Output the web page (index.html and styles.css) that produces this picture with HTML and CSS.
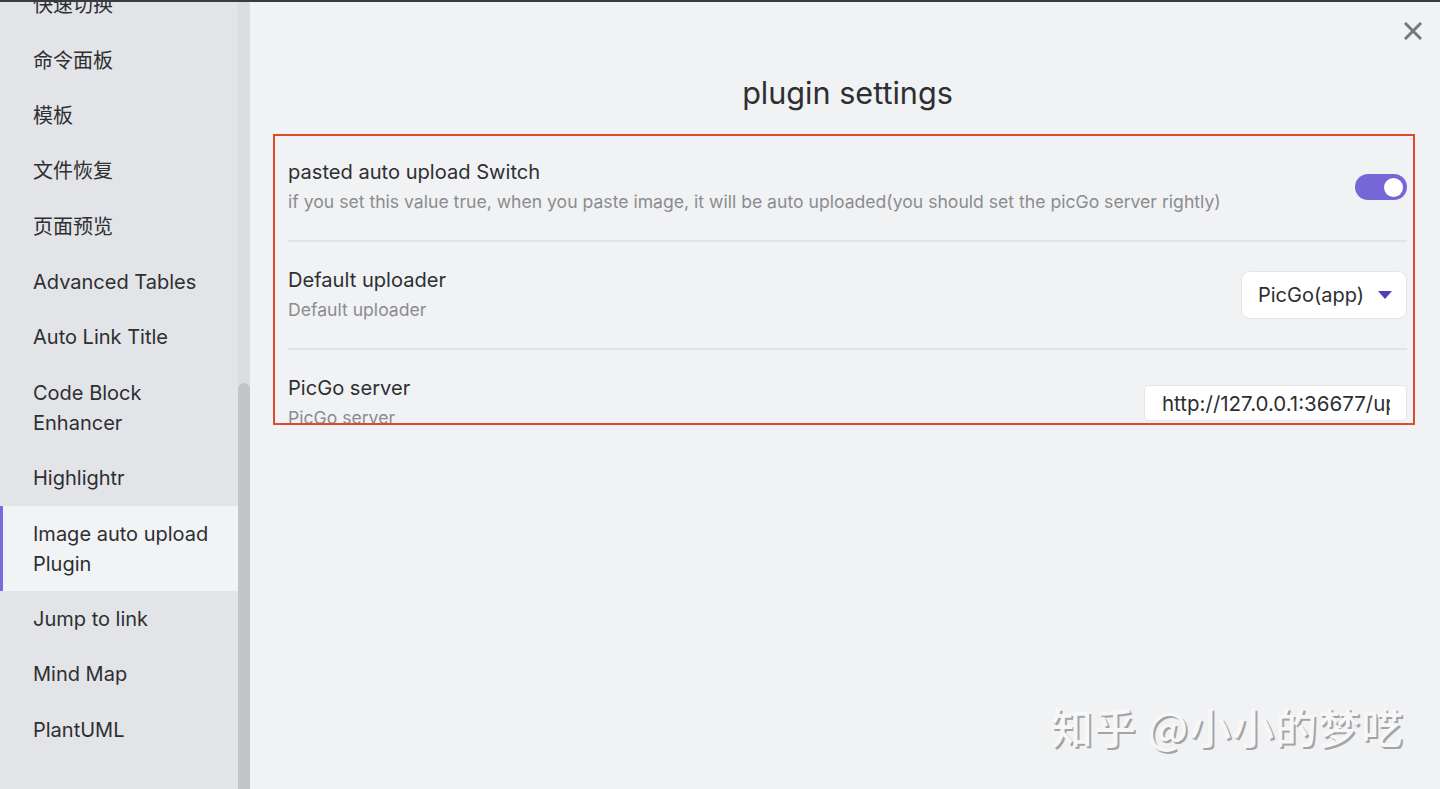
FILE: index.html
```html
<!DOCTYPE html>
<html lang="zh">
<head>
<meta charset="utf-8">
<title>plugin settings</title>
<link rel="stylesheet" href="styles.css">
</head>
<body>
<div class="app">
  <aside class="sidebar">
    <nav class="nav">
      <div class="nav-item">快速切换</div>
      <div class="nav-item">命令面板</div>
      <div class="nav-item">模板</div>
      <div class="nav-item">文件恢复</div>
      <div class="nav-item">页面预览</div>
      <div class="nav-item">Advanced Tables</div>
      <div class="nav-item">Auto Link Title</div>
      <div class="nav-item">Code Block<br>Enhancer</div>
      <div class="nav-item">Highlightr</div>
      <div class="nav-item active">Image auto upload<br>Plugin</div>
      <div class="nav-item">Jump to link</div>
      <div class="nav-item">Mind Map</div>
      <div class="nav-item">PlantUML</div>
    </nav>
    <div class="scroll-track"><div class="scroll-thumb"></div></div>
  </aside>
  <main class="main">
    <button class="close" aria-label="close">
      <svg width="18" height="18" viewBox="0 0 18 18"><path d="M2 2 L16 16 M16 2 L2 16" stroke="#777879" stroke-width="3" stroke-linecap="square" fill="none"/></svg>
    </button>
    <h1 class="title">plugin settings</h1>
    <section class="settings">
      <div class="setting">
        <div class="info">
          <div class="name">pasted auto upload Switch</div>
          <div class="desc">if you set this value true, when you paste image, it will be auto uploaded(you should set the picGo server rightly)</div>
        </div>
        <div class="toggle"><span class="knob"></span></div>
      </div>
      <div class="setting">
        <div class="info">
          <div class="name">Default uploader</div>
          <div class="desc">Default uploader</div>
        </div>
        <div class="select">
          <span>PicGo(app)</span>
          <svg width="14" height="9" viewBox="0 0 14 9"><path d="M0 0 H14 L7 8 Z" fill="#4f3fb8"/></svg>
        </div>
      </div>
      <div class="setting setting-last">
        <div class="info">
          <div class="name">PicGo server</div>
          <div class="desc">PicGo server</div>
        </div>
        <div class="input"><span class="input-text">http://127.0.0.1:36677/upload</span></div>
      </div>
      <div class="highlight-box"></div>
    </section>
    <div class="watermark">知乎 @小小的梦呓</div>
  </main>
</div>
</body>
</html>
```
FILE: styles.css
```css
* { box-sizing: border-box; }
html, body {
  margin: 0;
  padding: 0;
  height: 100%;
  overflow: hidden;
}
body {
  font-family: Inter, "Noto Sans CJK SC", sans-serif;
  color: #2d2f32;
  background: #f1f2f4;
  border-top: 2px solid #3a3b3d;
}
.app {
  display: flex;
  height: 787px;
}
.sidebar {
  width: 250px;
  flex: none;
  display: flex;
  background: #e3e4e7;
  overflow: hidden;
}
.nav {
  width: 238px;
  flex: none;
  margin-top: -24.5px;
}
.nav-item {
  padding: 12.7px 0 12.7px 33px;
  font-size: 20px;
  line-height: 30px;
  color: #2d2f32;
  white-space: nowrap;
}
.nav-item.active {
  background: #f2f3f5;
  border-left: 3px solid #7a6ae0;
  padding-left: 30px;
}
.scroll-track {
  width: 12px;
  flex: none;
  background: #dcdde0;
  display: flex;
  flex-direction: column;
}
.scroll-thumb {
  margin-top: 381px;
  flex: 1;
  background: #c3c4c6;
  border-radius: 6px 6px 0 0;
}
.main {
  flex: 1;
  position: relative;
  padding: 0 33px 0 38px;
}
.close {
  position: absolute;
  top: 18px;
  right: 16px;
  width: 22px;
  height: 22px;
  padding: 2px;
  border: 0;
  background: transparent;
}
.title {
  margin: 0;
  padding-top: 71px;
  height: 132px;
  text-align: center;
  font-size: 30.6px;
  line-height: 40px;
  font-weight: 400;
  color: #2d2f32;
}
.settings {
  position: relative;
}
.setting {
  display: flex;
  align-items: center;
  gap: 20px;
  padding: 24px 0;
  border-bottom: 2px solid #e2e3e6;
}
.setting-last { border-bottom: 0; }
.info { flex: 1; min-width: 0; }
.name {
  font-size: 20.1px;
  line-height: 28px;
  color: #2d2f32;
}
.desc {
  font-size: 17.6px;
  line-height: 29px;
  padding-top: 1px;
  color: #8b8c8f;
  white-space: nowrap;
}
.toggle {
  width: 52px;
  height: 26px;
  border-radius: 13px;
  background: #7766d6;
  display: flex;
  align-items: center;
  justify-content: flex-end;
  padding-right: 4px;
  flex: none;
}
.knob {
  width: 19px;
  height: 19px;
  border-radius: 50%;
  background: #ffffff;
}
.select {
  width: 166px;
  height: 48px;
  flex: none;
  display: flex;
  align-items: center;
  justify-content: space-between;
  padding: 0 14px 0 16px;
  background: #ffffff;
  border: 1px solid #e4e5e8;
  border-radius: 9px;
  font-size: 20px;
  color: #2d2f32;
}
.input {
  width: 263px;
  height: 36px;
  flex: none;
  display: flex;
  align-items: center;
  padding: 0 16px 0 17px;
  background: #ffffff;
  border: 1px solid #e4e5e8;
  border-radius: 5px;
  font-size: 20.5px;
  color: #2d2f32;
}
.input-text {
  display: block;
  overflow: hidden;
  white-space: nowrap;
  min-width: 0;
  flex: 1;
}
.highlight-box {
  position: absolute;
  left: -15px;
  right: -8px;
  top: 0;
  height: 291px;
  border: 2px solid #e04a2c;
  pointer-events: none;
}
.watermark {
  position: absolute;
  right: 36px;
  bottom: 33px;
  font-family: "Noto Sans CJK SC", sans-serif;
  font-size: 42px;
  font-weight: 500;
  color: #f7f7f7;
  text-shadow: 2px 2px 0 #a3a4a6;
  letter-spacing: 1px;
}
```
